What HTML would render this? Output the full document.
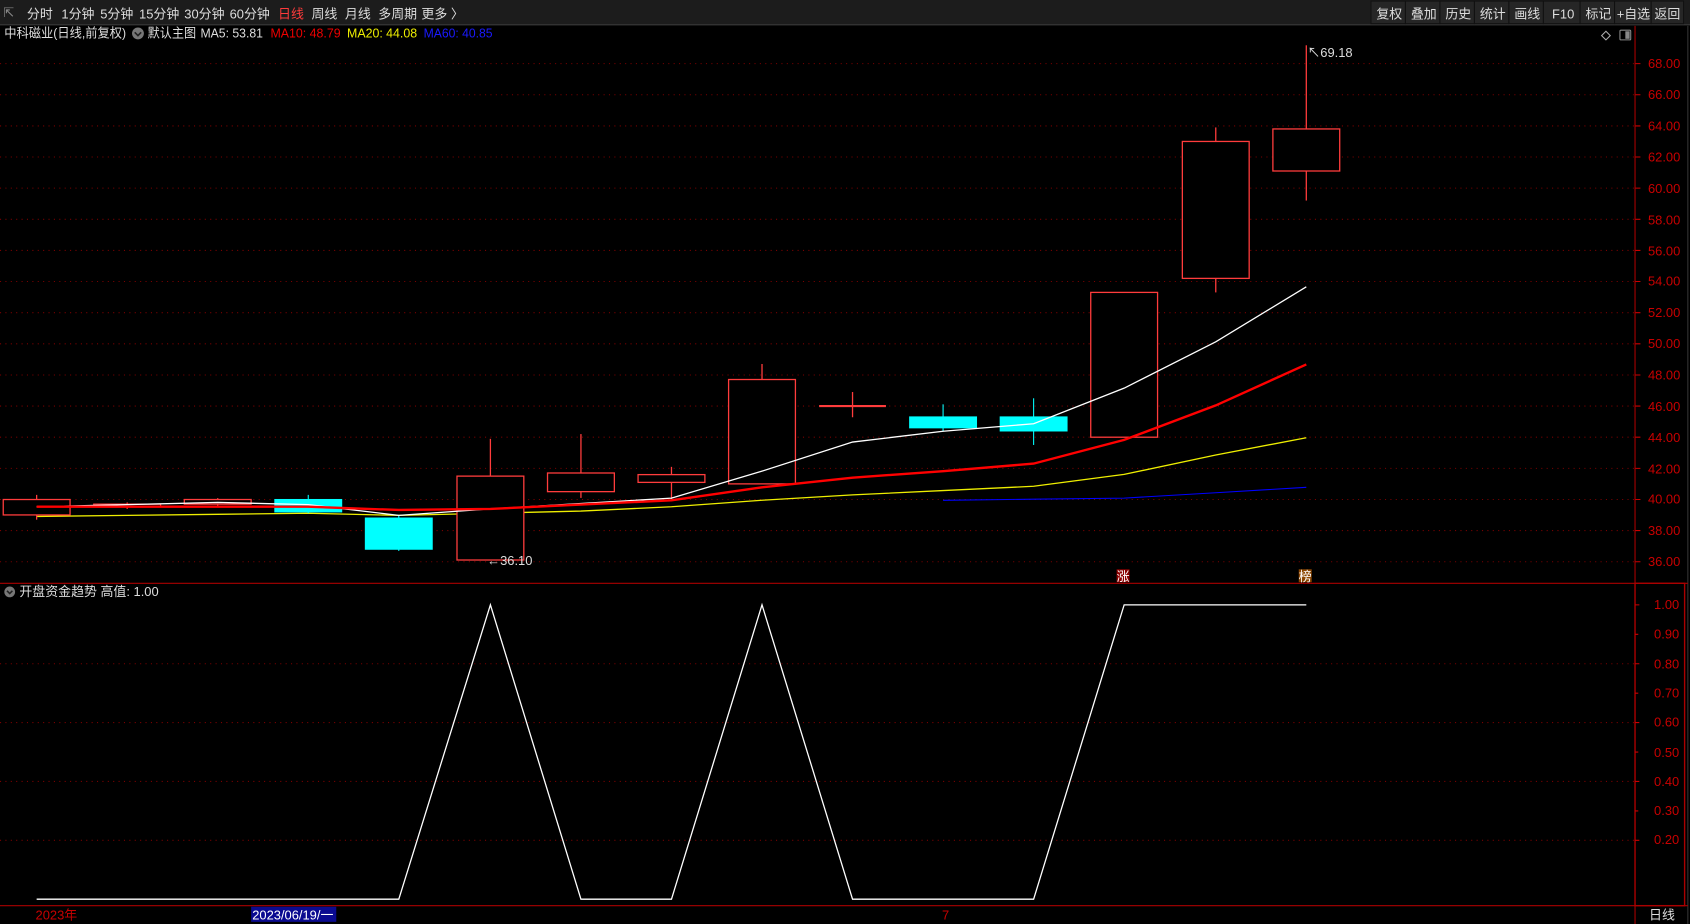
<!DOCTYPE html>
<html><head><meta charset="utf-8"><style>
html,body{margin:0;padding:0;background:#000;overflow:hidden}
svg{display:block}
text{font-family:"Liberation Sans","Noto Sans CJK SC",sans-serif;font-size:12px}
</style></head><body>
<svg width="1690" height="924" viewBox="0 0 1568 857" preserveAspectRatio="none" xmlns="http://www.w3.org/2000/svg">
<rect width="1568" height="857" fill="#000"/>
<!-- toolbar -->
<rect x="0" y="0" width="1568" height="23" fill="#1c1c1c"/>
<line x1="0" y1="23" x2="1568" y2="23" stroke="#3a3a3a"/>
<g fill="#ddd">
<text x="3" y="16" fill="#888" font-size="10">⇱</text>
<text x="25" y="17">分时</text><text x="57" y="17">1分钟</text><text x="93" y="17">5分钟</text>
<text x="129" y="17">15分钟</text><text x="171" y="17">30分钟</text><text x="213" y="17">60分钟</text>
<text x="258" y="17" fill="#ff3b3b">日线</text><text x="289" y="17">周线</text><text x="320" y="17">月线</text>
<text x="351" y="17">多周期</text><text x="391" y="17">更多 〉</text>
</g>
<g fill="#262626" stroke="#111">
<rect x="1272" y="1" width="32" height="21"/><rect x="1304" y="1" width="32" height="21"/>
<rect x="1336" y="1" width="32" height="21"/><rect x="1368" y="1" width="32" height="21"/>
<rect x="1400" y="1" width="32" height="21"/><rect x="1432" y="1" width="34" height="21"/>
<rect x="1466" y="1" width="32" height="21"/><rect x="1498" y="1" width="34" height="21"/>
<rect x="1532" y="1" width="30" height="21"/>
</g>
<g fill="#ddd">
<text x="1277" y="17">复权</text><text x="1309" y="17">叠加</text><text x="1341" y="17">历史</text>
<text x="1373" y="17">统计</text><text x="1405" y="17">画线</text><text x="1440" y="17">F10</text>
<text x="1471" y="17">标记</text><text x="1500" y="17">+自选</text><text x="1535" y="17">返回</text>
</g>
<!-- title line -->
<text x="4" y="35" fill="#ddd" textLength="113" lengthAdjust="spacingAndGlyphs">中科磁业(日线,前复权)</text>
<circle cx="128" cy="31" r="5.5" fill="#777"/><path d="M125 30 l3 3 l3 -3" stroke="#222" stroke-width="1.5" fill="none"/>
<text x="137" y="35" fill="#ddd" textLength="45" lengthAdjust="spacingAndGlyphs">默认主图</text>
<text x="186" y="35" fill="#ddd" textLength="58" lengthAdjust="spacingAndGlyphs">MA5: 53.81</text>
<text x="251" y="35" fill="#e00" textLength="65" lengthAdjust="spacingAndGlyphs">MA10: 48.79</text>
<text x="322" y="35" fill="#ee0" textLength="65" lengthAdjust="spacingAndGlyphs">MA20: 44.08</text>
<text x="393" y="35" fill="#1a1aff" textLength="64" lengthAdjust="spacingAndGlyphs">MA60: 40.85</text>
<path d="M1490 29 l4 4 l-4 4 l-4 -4z" fill="none" stroke="#aaa"/>
<rect x="1503" y="28" width="10" height="9" fill="none" stroke="#888" rx="1"/><rect x="1508" y="29" width="4" height="7" fill="#888"/>
<!-- main grid -->
<g stroke="#7a0000" stroke-dasharray="1 4">
<line x1="0" y1="59" x2="1517" y2="59"/><line x1="0" y1="87.9" x2="1517" y2="87.9"/>
<line x1="0" y1="116.8" x2="1517" y2="116.8"/><line x1="0" y1="145.6" x2="1517" y2="145.6"/>
<line x1="0" y1="174.5" x2="1517" y2="174.5"/><line x1="0" y1="203.4" x2="1517" y2="203.4"/>
<line x1="0" y1="232.3" x2="1517" y2="232.3"/><line x1="0" y1="261.1" x2="1517" y2="261.1"/>
<line x1="0" y1="290" x2="1517" y2="290"/><line x1="0" y1="318.9" x2="1517" y2="318.9"/>
<line x1="0" y1="347.8" x2="1517" y2="347.8"/><line x1="0" y1="376.6" x2="1517" y2="376.6"/>
<line x1="0" y1="405.5" x2="1517" y2="405.5"/><line x1="0" y1="434.4" x2="1517" y2="434.4"/>
<line x1="0" y1="463.3" x2="1517" y2="463.3"/><line x1="0" y1="492.1" x2="1517" y2="492.1"/>
<line x1="0" y1="521" x2="1517" y2="521"/>
</g>
<g fill="#c80000" text-anchor="end">
<text x="1559" y="63">68.00</text><text x="1559" y="92">66.00</text><text x="1559" y="121">64.00</text>
<text x="1559" y="150">62.00</text><text x="1559" y="179">60.00</text><text x="1559" y="208">58.00</text>
<text x="1559" y="237">56.00</text><text x="1559" y="265">54.00</text><text x="1559" y="294">52.00</text>
<text x="1559" y="323">50.00</text><text x="1559" y="352">48.00</text><text x="1559" y="381">46.00</text>
<text x="1559" y="410">44.00</text><text x="1559" y="439">42.00</text><text x="1559" y="467">40.00</text>
<text x="1559" y="496">38.00</text><text x="1559" y="525">36.00</text>
</g>
<g stroke="#c00">
<path d="M1517 59h5M1517 87.9h5M1517 116.8h5M1517 145.6h5M1517 174.5h5M1517 203.4h5M1517 232.3h5M1517 261.1h5M1517 290h5M1517 318.9h5M1517 347.8h5M1517 376.6h5M1517 405.5h5M1517 434.4h5M1517 463.3h5M1517 492.1h5M1517 521h5"/>
</g>
<line x1="1517" y1="24" x2="1517" y2="541" stroke="#a00"/>
<line x1="1566" y1="24" x2="1566" y2="857" stroke="#333"/>
<!-- MA lines -->
<polyline fill="none" stroke="#00f" stroke-width="1" points="875,464 959,463 1043,462 1128,457 1212,452"/>
<polyline fill="none" stroke="#ee0" stroke-width="1.2" points="34,479 118,478 202,477 286,476 370,478 455,476 539,474 623,470 707,464 791,459 875,455 959,451 1043,440 1128,422 1212,406"/>
<!-- candles -->
<g stroke="#ff3c3c" fill="#000" stroke-width="1.2">
<line x1="34" y1="459" x2="34" y2="482"/><rect x="3" y="463.3" width="62" height="14.3"/>
<line x1="118" y1="466" x2="118" y2="472"/><rect x="87" y="467.6" width="62" height="2"/>
<line x1="202" y1="462" x2="202" y2="469"/><rect x="171" y="463.3" width="62" height="4.3"/>
<line x1="455" y1="407" x2="455" y2="441.6"/><rect x="424" y="441.6" width="62" height="77.8"/>
<line x1="539" y1="402.6" x2="539" y2="461.8"/><rect x="508" y="438.7" width="62" height="17.3"/>
<line x1="623" y1="433" x2="623" y2="463"/><rect x="592" y="440.2" width="62" height="7.2"/>
<line x1="707" y1="337.6" x2="707" y2="352"/><rect x="676" y="352" width="62" height="96.8"/>
<line x1="791" y1="363.6" x2="791" y2="387"/><line x1="760" y1="376.6" x2="822" y2="376.6" stroke-width="2"/>
<rect x="1012" y="271.2" width="62" height="134.3"/>
<line x1="1128" y1="118.2" x2="1128" y2="131.2"/><line x1="1128" y1="258.2" x2="1128" y2="271.2"/><rect x="1097" y="131.2" width="62" height="127"/>
<line x1="1212" y1="42" x2="1212" y2="119.6"/><line x1="1212" y1="158.6" x2="1212" y2="186"/><rect x="1181" y="119.6" width="62" height="39"/>
</g>
<g fill="#0ff" stroke="#0ff">
<line x1="286" y1="459" x2="286" y2="476"/><rect x="255" y="463.3" width="62" height="11.5"/>
<line x1="370" y1="478" x2="370" y2="511"/><rect x="339" y="480.5" width="62" height="28.9"/>
<line x1="875" y1="375" x2="875" y2="400"/><rect x="844" y="386.7" width="62" height="10.1"/>
<line x1="959" y1="369.4" x2="959" y2="412.7"/><rect x="928" y="386.7" width="62" height="13"/>
</g>
<polyline fill="none" stroke="#fff" stroke-width="1.2" points="34,470 118,468 202,466 286,468 370,478 455,472 539,467 623,462 707,437 791,410 875,400 959,393 1043,360 1128,317 1212,266"/>
<polyline fill="none" stroke="#f00" stroke-width="2.2" points="34,470 118,470 202,470 286,470 370,473 455,472 539,468 623,464 707,452 791,443 875,437 959,430 1043,408 1128,376 1212,338"/>
<text x="1213" y="53" fill="#ddd">↖69.18</text>
<text x="452" y="524" fill="#ddd">←36.10</text>
<rect x="1036" y="528" width="12" height="12" fill="#8b0000"/><text x="1036" y="539" fill="#fff" font-size="11">涨</text>
<rect x="1205" y="528" width="12" height="12" fill="#8b4500"/><text x="1205" y="539" fill="#fff" font-size="11">榜</text>
<!-- separator -->
<line x1="0" y1="541" x2="1566" y2="541" stroke="#a00"/>
<!-- sub chart -->
<circle cx="9" cy="549" r="5" fill="#777"/><path d="M6.5 548 l2.5 2.5 l2.5 -2.5" stroke="#222" stroke-width="1.5" fill="none"/>
<text x="18" y="553" fill="#ddd">开盘资金趋势 高值: 1.00</text>
<g stroke="#7a0000" stroke-dasharray="1 4">
<line x1="0" y1="615.6" x2="1517" y2="615.6"/><line x1="0" y1="670.2" x2="1517" y2="670.2"/>
<line x1="0" y1="724.8" x2="1517" y2="724.8"/><line x1="0" y1="779.4" x2="1517" y2="779.4"/>
</g>
<rect x="1517" y="541" width="46" height="299" fill="none" stroke="#a00" stroke-width="1.3"/>
<g stroke="#c00"><path d="M1517 561h4M1517 588.3h3M1517 615.6h4M1517 642.9h3M1517 670.2h4M1517 697.5h3M1517 724.8h4M1517 752.1h3M1517 779.4h4"/></g>
<g fill="#c80000" text-anchor="end">
<text x="1558" y="565">1.00</text><text x="1558" y="592">0.90</text><text x="1558" y="620">0.80</text>
<text x="1558" y="647">0.70</text><text x="1558" y="674">0.60</text><text x="1558" y="702">0.50</text>
<text x="1558" y="729">0.40</text><text x="1558" y="756">0.30</text><text x="1558" y="783">0.20</text>
</g>
<polyline fill="none" stroke="#fff" stroke-width="1.2" points="34,834 370,834 455,561 539,834 623,834 707,561 791,834 959,834 1043,561 1212,561"/>
<line x1="0" y1="840" x2="1566" y2="840" stroke="#a00"/>
<line x1="1517" y1="840" x2="1517" y2="857" stroke="#a00"/>
<text x="33" y="853" fill="#c80000">2023年</text>
<rect x="233" y="841" width="79" height="14" fill="#0a0a90"/>
<text x="234" y="853" fill="#fff">2023/06/19/一</text>
<text x="874" y="853" fill="#c80000">7</text>
<text x="1530" y="853" fill="#ddd">日线</text>
</svg>
</body></html>
